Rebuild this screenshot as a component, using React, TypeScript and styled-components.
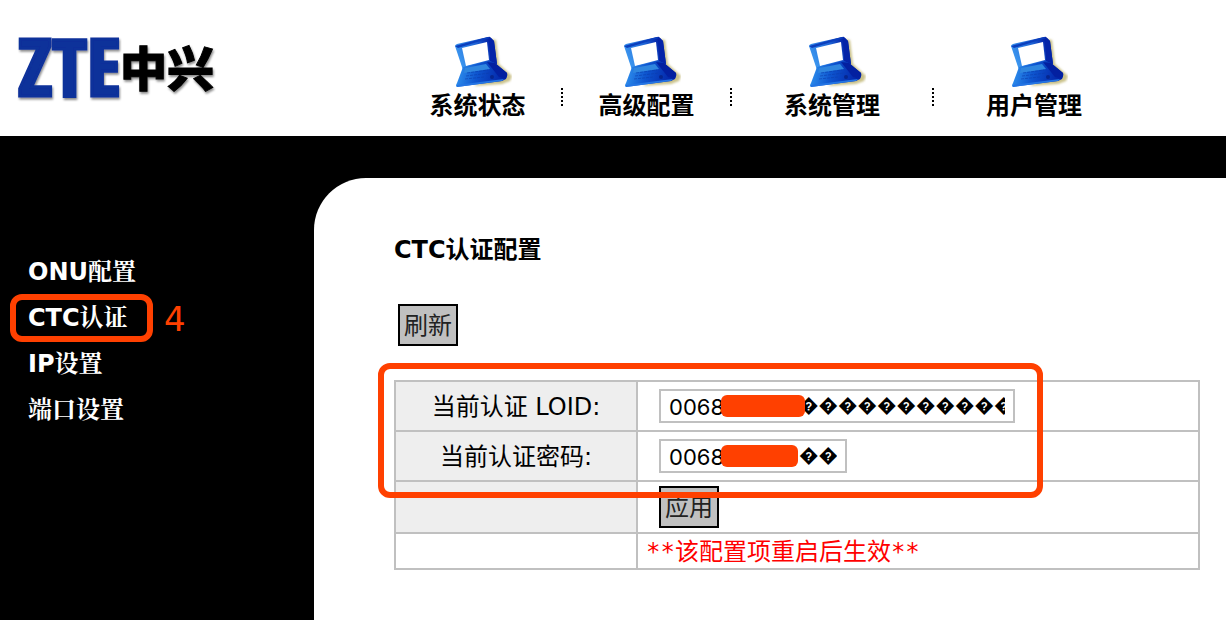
import React from "react";
import styled, { createGlobalStyle } from "styled-components";

const latin = '"DejaVu Sans", "Noto Sans CJK SC", sans-serif';
const accent = "#ff4000";
const line = "#c0c0c0";

const GlobalStyle = createGlobalStyle`
  *, *::before, *::after { box-sizing: border-box; }
  body {
    margin: 0;
    background: #000;
    color: #000;
    font: 24px/36px ${latin};
  }
`;

const Page = styled.div`
  display: flex;
  flex-direction: column;
  min-height: 100vh;
`;

const Header = styled.header`
  display: flex;
  align-items: flex-start;
  min-height: 136px;
  background: #fff;
`;

const Brand = styled.a`
  flex: 0 0 394px;
  padding: 24px 0 0 16px;
  line-height: 0;
`;

const Nav = styled.nav`
  display: flex;
  flex: 1;
  padding-top: 36px;
`;

const NavLink = styled.a<{ $wide?: boolean }>`
  display: flex;
  flex: 0 1 ${(p) => (p.$wide ? 200 : 167)}px;
  flex-direction: column;
  align-items: center;
  color: #000;
  font-family: "Noto Sans CJK SC", sans-serif;
  font-weight: 700;
  line-height: 32px;
  white-space: nowrap;
  text-decoration: none;
`;

const Divider = styled.span`
  height: 18px;
  margin-top: 52px;
  border-left: 2px dotted #000;
`;

const Body = styled.div`
  display: flex;
  flex: 1;
  padding-top: 42px;
`;

const Sidebar = styled.aside`
  flex: 0 0 314px;
  padding: 71px 0 0 28px;
`;

const Menu = styled.ul`
  display: flex;
  flex-direction: column;
  align-items: flex-start;
  margin: 0;
  padding: 0;
  list-style: none;
`;

const MenuItem = styled.li`
  position: relative;
  height: 46px;
  line-height: 46px;
`;

const MenuLink = styled.a`
  color: #fff;
  font-family: "DejaVu Sans", "Noto Serif CJK SC", "Noto Sans CJK SC", sans-serif;
  font-weight: 700;
  text-decoration: none;
`;

const MenuMark = styled.span`
  position: absolute;
  top: -1px;
  left: -18px;
  width: 143px;
  height: 48px;
  border: 6px solid ${accent};
  border-radius: 12px;
  pointer-events: none;
`;

const StepNumber = styled.span`
  position: absolute;
  top: 1px;
  left: 136px;
  color: ${accent};
  font-size: 34px;
`;

const Content = styled.main`
  flex: 1;
  min-width: 0;
  padding: 54px 26px 50px 80px;
  border-top-left-radius: 52px;
  background: #fff;
`;

const Title = styled.h1`
  margin: 0 0 36px;
  font-size: 24px;
  line-height: 36px;
`;

const Button = styled.button`
  display: block;
  height: 42px;
  padding: 0 4px 2px;
  border: 2px solid #000;
  border-radius: 0;
  background: ${line};
  color: #222;
  font: 24px/36px "Noto Sans CJK SC", sans-serif;
`;

const Toolbar = styled.div`
  padding-left: 4px;
  margin-bottom: 34px;
`;

const FormArea = styled.form`
  position: relative;
`;

const FormTable = styled.table`
  width: 100%;
  border-collapse: collapse;
  table-layout: fixed;
`;

const LabelCell = styled.th<{ $plain?: boolean }>`
  width: 242px;
  padding: 2px 0 0;
  border: 2px solid ${line};
  background: ${(p) => (p.$plain ? "#fff" : "#eee")};
  font-weight: 400;
`;

const FieldCell = styled.td`
  padding: 4px 0 4px 21px;
  border: 2px solid ${line};
`;

const NoteCell = styled.td`
  padding: 2px 0 0 8px;
  border: 2px solid ${line};
  color: #f00;
  font-family: "DejaVu Sans Mono", "Noto Sans CJK SC", monospace;
  line-height: 32px;
`;

const Field = styled.div<{ $width: number }>`
  position: relative;
  display: flex;
  align-items: center;
  width: ${(p) => p.$width}px;
  height: 34px;
  margin: 3px 0;
  padding: 0 8px;
  border: 2px solid ${line};
`;

const TextInput = styled.input`
  flex: 0 0 130px;
  width: 130px;
  padding: 2px 0 0;
  border: 0;
  background: transparent;
  color: #000;
  font: 22px/28px Inter, sans-serif;
`;

const Unreadable = styled.span`
  flex: 1;
  overflow: hidden;
  font: 19px/30px Roboto, "Noto Sans CJK SC", sans-serif;
  white-space: nowrap;
`;

const Redaction = styled.span<{ $width: number }>`
  position: absolute;
  top: 4px;
  left: 60px;
  width: ${(p) => p.$width}px;
  height: 22px;
  border-radius: 6px;
  background: ${accent};
`;

const FormMark = styled.span`
  position: absolute;
  top: -17px;
  left: -16px;
  width: 665px;
  height: 135px;
  border: 6px solid ${accent};
  border-radius: 12px;
  pointer-events: none;
`;

function Logo() {
  return (
    <svg width="204" height="88" viewBox="0 0 204 88" role="img" aria-label="ZTE中兴">
      <defs>
        <filter id="logoShadow" x="-5%" y="-5%" width="115%" height="120%">
          <feDropShadow dx="1" dy="2" stdDeviation="1" floodOpacity="0.45" />
        </filter>
      </defs>
      <g filter="url(#logoShadow)">
        <text x="2" y="72" fill="#10309a" stroke="#10309a" strokeWidth="3" fontSize="80" fontWeight="700" fontFamily="Open Sans Condensed, Roboto Condensed, sans-serif">
          ZTE
        </text>
        <text x="104" y="62" fill="#000" stroke="#000" strokeWidth="1" fontSize="47" fontWeight="900" fontFamily="Noto Sans CJK SC, sans-serif">
          中兴
        </text>
      </g>
    </svg>
  );
}

function Laptop() {
  return (
    <svg width="68" height="52" viewBox="-10 0 68 52" aria-hidden="true">
      <defs>
        <linearGradient id="lid" x1="0" x2="1" y1="0.4" y2="0">
          <stop offset="0" stopColor="#3a94ee" />
          <stop offset="0.5" stopColor="#1d62d4" />
          <stop offset="0.8" stopColor="#0424a8" />
        </linearGradient>
        <linearGradient id="base" x1="0" x2="1" y1="0" y2="0.1">
          <stop offset="0" stopColor="#3398f2" />
          <stop offset="0.45" stopColor="#0e55cf" />
          <stop offset="1" stopColor="#0222a6" />
        </linearGradient>
        <filter id="soft" x="-10%" y="-10%" width="120%" height="120%">
          <feGaussianBlur stdDeviation="0.8" />
        </filter>
      </defs>
      <path d="M36 3 42 4 45 28 58 40 56 45 48 48 20 50 38 40Z" fill="#cbc28a" filter="url(#soft)" />
      <path d="M1 10Q1 9 3 8L34 1Q36 0 37 2L40 5 43 28 34 32 9 34Z" fill="url(#lid)" />
      <path d="M35 2 37 2 40 5 43 28 36 25Z" fill="#0424a8" />
      <path d="M1 10 34 1 36 2 4 12Z" fill="#0b3fbd" />
      <path d="M8 12 33 6 35 24 12 30Z" fill="#fff" />
      <path d="M9 31 35 25 41 27 53 37Q54 39 52 43L48 45 3 51Q1 50 3 47Z" fill="url(#base)" />
      <path d="M11 32 32 28 36 33 10 37Z" fill="#2f86df" />
      <path d="M13 37 34 34M12 40 36 37M11 43 30 41" stroke="#0a3eae" strokeWidth="1" strokeOpacity="0.6" strokeDasharray="3 1" fill="none" />
      <path d="M33 26 41 27 53 37 51 42 45 41Z" fill="#0320a0" />
      <path d="M3 49 34 45 50 43 48 45 3 51Z" fill="#2475e4" />
      <circle cx="38" cy="41" r="2" fill="#06268f" />
    </svg>
  );
}

const sections = [
  { label: "系统状态" },
  { label: "高级配置" },
  { label: "系统管理", wide: true },
  { label: "用户管理", wide: true },
];

const menu = ["ONU配置", "CTC认证", "IP设置", "端口设置"];

const fields = [
  { id: "loid", label: "当前认证 LOID:", value: "0068", width: 356, hidden: 84, unreadable: 11 },
  { id: "password", label: "当前认证密码:", value: "0068", width: 188, hidden: 77, unreadable: 2 },
];

export default function App() {
  return (
    <>
      <GlobalStyle />
      <Page>
        <Header>
          <Brand href="#">
            <Logo />
          </Brand>
          <Nav>
            {sections.map((s, i) => (
              <React.Fragment key={s.label}>
                {i > 0 && <Divider />}
                <NavLink href="#" $wide={s.wide}>
                  <Laptop />
                  {s.label}
                </NavLink>
              </React.Fragment>
            ))}
          </Nav>
        </Header>
        <Body>
          <Sidebar>
            <Menu>
              {menu.map((label) => (
                <MenuItem key={label}>
                  <MenuLink href="#">{label}</MenuLink>
                  {label === "CTC认证" && (
                    <>
                      <MenuMark />
                      <StepNumber>4</StepNumber>
                    </>
                  )}
                </MenuItem>
              ))}
            </Menu>
          </Sidebar>
          <Content>
            <Title>CTC认证配置</Title>
            <Toolbar>
              <Button type="button">刷新</Button>
            </Toolbar>
            <FormArea onSubmit={(e) => e.preventDefault()}>
              <FormTable>
                <tbody>
                  {fields.map((f) => (
                    <tr key={f.id}>
                      <LabelCell scope="row">
                        <label htmlFor={f.id}>{f.label}</label>
                      </LabelCell>
                      <FieldCell>
                        <Field $width={f.width}>
                          <TextInput id={f.id} defaultValue={f.value} />
                          <Unreadable>{"\uFFFD".repeat(f.unreadable)}</Unreadable>
                          <Redaction $width={f.hidden} />
                        </Field>
                      </FieldCell>
                    </tr>
                  ))}
                  <tr>
                    <LabelCell as="td" />
                    <FieldCell>
                      <Button type="submit">应用</Button>
                    </FieldCell>
                  </tr>
                  <tr>
                    <LabelCell as="td" $plain />
                    <NoteCell>**该配置项重启后生效**</NoteCell>
                  </tr>
                </tbody>
              </FormTable>
              <FormMark />
            </FormArea>
          </Content>
        </Body>
      </Page>
    </>
  );
}
